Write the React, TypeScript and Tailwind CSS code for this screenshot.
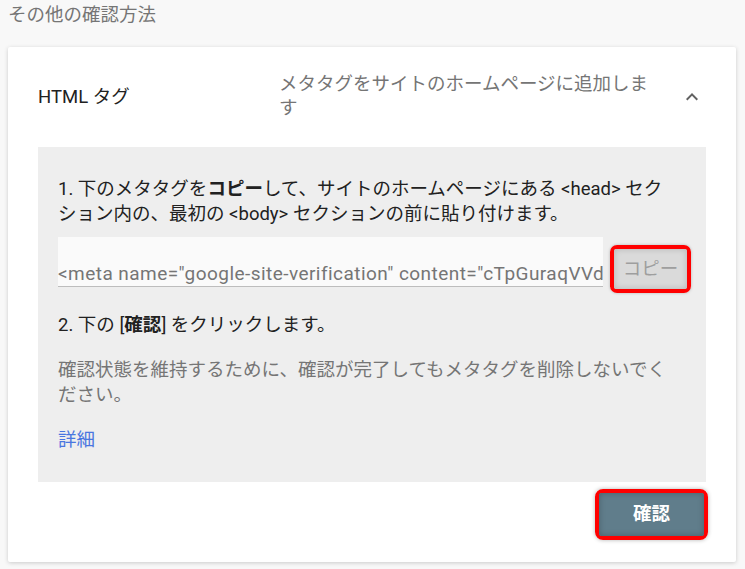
import { useState } from 'react'

const META_TAG = '<meta name="google-site-verification" content="cTpGuraqVVdXk3hQ8mZp2YtLwR7sN4bA1eFgHjK9oUc" />'

function ChevronUp() {
  return (
    <svg width="24" height="24" viewBox="0 0 24 24" className="text-[#616161]">
      <path d="M7.41 15.41 12 10.83l4.59 4.58L18 14l-6-6-6 6z" fill="currentColor" />
    </svg>
  )
}

export default function App() {
  const [open, setOpen] = useState(true)

  return (
    <div className="min-h-[569px] bg-[#f8f8f8] font-[Roboto,'Noto_Sans_CJK_JP',sans-serif] text-[18.5px] leading-[25px] px-[8px] pt-[3px]">
      <h2 className="text-[#757575] font-normal">その他の確認方法</h2>

      <div className="mt-[19px] w-[728px] bg-white rounded-[2px] shadow-[0_1px_4px_rgba(0,0,0,0.18)] px-[30px]">
        <div className="h-[100px] flex items-center">
          <div className="w-[241px] text-[#212121]">HTML タグ</div>
          <div className="w-[385px] text-[#757575] leading-[24px] pb-[2px]">
            メタタグをサイトのホームページに追加します
          </div>
          <button onClick={() => setOpen(o => !o)} className="ml-auto mr-[2px] w-[24px] h-[24px] flex items-center justify-center">
            <ChevronUp />
          </button>
        </div>

        {open && (
          <div className="bg-[#eeeeee] px-[20px] pt-[30px] pb-[29px]">
            <p className="w-[615px] text-[#212121]">
              1. 下のメタタグを<b className="font-bold">コピー</b>して、サイトのホームページにある &lt;head&gt; セクション内の、最初の &lt;body&gt; セクションの前に貼り付けます。
            </p>

            <div className="mt-[10px] flex items-start gap-[7px]">
              <div className="shrink-0 w-[545px] h-[50px] bg-[#fafafa] border-b border-[#bdbdbd] flex items-end overflow-hidden">
                <input
                  readOnly
                  value={META_TAG}
                  className="w-full bg-transparent outline-none text-[#757575] text-[19px] tracking-[0.45px] leading-[25px] pb-0 font-[Roboto,sans-serif]"
                />
              </div>
              <div className="shrink-0 mt-[8px] border-[4px] border-[#ff0000] rounded-[7px] shadow-[0_0_3px_rgba(0,0,0,0.25)]">
                <button className="w-[73px] h-[40px] bg-[#dadada] rounded-[2px] shadow-[inset_0_0_6px_rgba(0,0,0,0.18)] text-[#9e9e9e] text-[18.5px]">
                  コピー
                </button>
              </div>
            </div>

            <p className="mt-[20px] text-[#212121]">
              2. 下の [<b className="font-bold">確認</b>] をクリックします。
            </p>

            <p className="w-[615px] mt-[20px] text-[#757575]">
              確認状態を維持するために、確認が完了してもメタタグを削除しないでください。
            </p>

            <a href="#" className="block mt-[20px] text-[#4a76e0] w-fit">詳細</a>
          </div>
        )}

        <div className="flex justify-end pt-[7px] pb-[22px] -mr-[2px]">
          <div className="border-[4px] border-[#ff0000] rounded-[8px] shadow-[0_0_4px_rgba(0,0,0,0.3)]">
            <button className="w-[105px] h-[43px] bg-[#607d8b] rounded-[2px] shadow-[inset_0_0_6px_rgba(0,0,0,0.25)] text-white font-bold text-[18.5px]">
              確認
            </button>
          </div>
        </div>
      </div>
    </div>
  )
}
